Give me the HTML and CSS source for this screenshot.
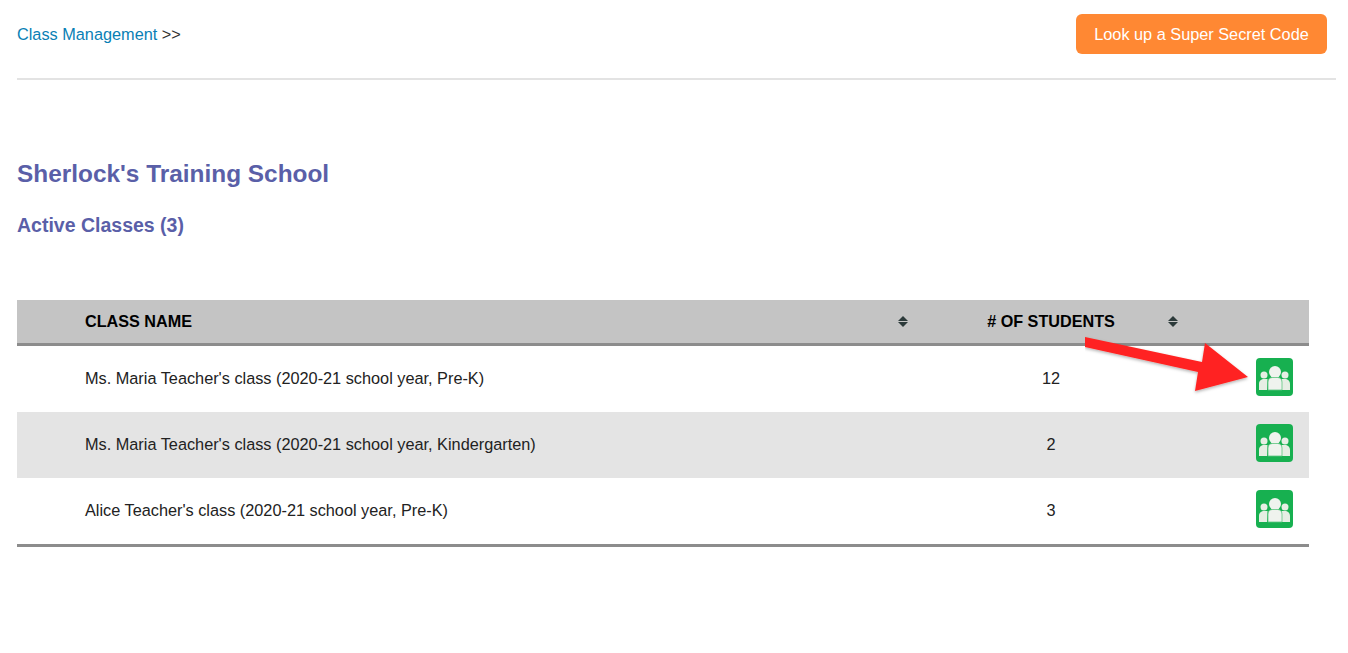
FILE: index.html
```html
<!DOCTYPE html>
<html lang="en">
<head>
    <meta charset="UTF-8">
    <title>Class Management</title>
    <link rel="stylesheet" href="styles.css">
</head>
<body>
    <div class="topbar">
        <div class="breadcrumb"><a href="#">Class Management</a> &gt;&gt;</div>
        <a href="#" class="lookup">Look up a Super Secret Code</a>
    </div>

    <h1>Sherlock's Training School</h1>
    <h2>Active Classes (3)</h2>

    <div class="table-wrap">
        <table class="classes">
            <thead>
                <tr>
                    <th class="col-name">CLASS NAME<span class="sort"></span></th>
                    <th class="col-count">
                        # OF STUDENTS<span class="sort"></span>
                    </th>
                    <th class="col-action"></th>
                </tr>
            </thead>
            <tbody>
                <tr>
                    <td class="col-name">Ms. Maria Teacher's class (2020-21 school year, Pre-K)</td>
                    <td class="col-count">12</td>
                    <td class="col-action"><a href="#" class="roster"><svg viewBox="0 0 37 38"><use href="#people"></use></svg></a></td>
                </tr>
                <tr class="shade">
                    <td class="col-name">Ms. Maria Teacher's class (2020-21 school year, Kindergarten)</td>
                    <td class="col-count">2</td>
                    <td class="col-action"><a href="#" class="roster"><svg viewBox="0 0 37 38"><use href="#people"></use></svg></a></td>
                </tr>
                <tr>
                    <td class="col-name">Alice Teacher's class (2020-21 school year, Pre-K)</td>
                    <td class="col-count">3</td>
                    <td class="col-action"><a href="#" class="roster"><svg viewBox="0 0 37 38"><use href="#people"></use></svg></a></td>
                </tr>
            </tbody>
        </table>

        <!-- annotation arrow on top of the screenshot -->
        <svg class="arrow" viewBox="0 0 170 60">
            <defs>
                <filter id="blur" x="-10%" y="-10%" width="120%" height="130%">
                    <feDropShadow dx="0" dy="1.5" stdDeviation="1.5" flood-color="#000" flood-opacity="0.3"></feDropShadow>
                </filter>
            </defs>
            <polygon filter="url(#blur)" fill="#ff2420" points="0,1 0,11 113,36 110,55 163,41 120,7 117,26"></polygon>
        </svg>
    </div>

    <svg class="defs" width="0" height="0">
        <symbol id="people" viewBox="0 0 37 38">
            <circle cx="8" cy="17" r="3.500" fill="#e6eee4"></circle>
            <circle cx="29" cy="17" r="3.500" fill="#e6eee4"></circle>
            <path fill="#e6eee4" d="M3 32v-6c0-3.500 2.500-5 5-5h3.500l-.5 11zM34 32v-6c0-3.500-2.500-5-5-5h-3.500l.5 11z"></path>
            <circle cx="19" cy="14" r="6" fill="#eff3ee"></circle>
            <path fill="#eff3ee" stroke="#5fc581" stroke-width="0.8" d="M12 32v-8c0-3 2-4.500 4.500-4.500h5c2.500 0 4.500 1.500 4.500 4.500v8z"></path>
        </symbol>
    </svg>
</body>
</html>
```

FILE: styles.css
```css
body {
    margin: 0;
    padding: 0 12px 0 17px;
    font-family: "Liberation Sans", Arial, sans-serif;
    font-size: 16.3px;
    color: #222;
    background: #fff;
}
a {
    text-decoration: none;
}
.topbar {
    display: flex;
    justify-content: space-between;
    align-items: flex-start;
    height: 80px;
    padding: 14px 9px 0 0;
    box-sizing: border-box;
    border-bottom: 2px solid #e3e3e3;
}
.breadcrumb {
    margin-top: 11px;
    line-height: 18px;
    color: #333;
}
.breadcrumb a {
    color: #0a7fb5;
}
.lookup {
    display: block;
    width: 251px;
    height: 40px;
    line-height: 40px;
    text-align: center;
    color: #fff;
    background: #ff8833;
    border-radius: 6px;
    font-size: 16.3px;
}
h1 {
    margin: 79px 0 0;
    font-size: 24.4px;
    line-height: 29px;
    color: #5a5fa8;
}
h2 {
    margin: 26px 0 0;
    font-size: 19.5px;
    line-height: 22px;
    color: #5a5fa8;
}
.table-wrap {
    position: relative;
    width: 1292px;
    margin-top: 64px;
}
.classes {
    width: 100%;
    border-collapse: collapse;
    border-bottom: 3px solid #8c8c8c;
}
.classes th {
    height: 43px;
    padding: 0;
    background: #c4c4c4;
    border-bottom: 3px solid #8c8c8c;
    color: #000;
    font-size: 16.2px;
    text-align: left;
    position: relative;
}
.classes td {
    height: 64px;
    padding: 0 0 2px;
}
.shade td {
    background: #e4e4e4;
}
.col-name {
    padding-left: 68px !important;
}
.col-count {
    width: 280px;
    text-align: center;
}
.classes th.col-count {
    text-align: center;
}
.col-action {
    width: 118px;
}
.classes td.col-action {
    vertical-align: top;
}
.sort {
    position: absolute;
    top: 16px;
    width: 0;
    height: 11px;
}
.sort::before,
.sort::after {
    content: "";
    position: absolute;
    left: -5px;
    border-left: 5px solid transparent;
    border-right: 5px solid transparent;
}
.sort::before {
    top: 0;
    border-bottom: 5px solid #2c3a3a;
}
.sort::after {
    top: 6px;
    border-top: 5px solid #2c3a3a;
}
.col-name .sort {
    right: 8px;
}
.col-count .sort {
    right: 18px;
}
.roster {
    display: block;
    width: 37px;
    height: 38px;
    margin: 12px 0 0 65px;
    border-radius: 4px;
    background: #17b050;
}
.roster svg {
    display: block;
    width: 37px;
    height: 38px;
}
.arrow {
    position: absolute;
    left: 1068px;
    top: 36px;
    width: 170px;
    height: 60px;
}
.defs {
    position: absolute;
}
```
